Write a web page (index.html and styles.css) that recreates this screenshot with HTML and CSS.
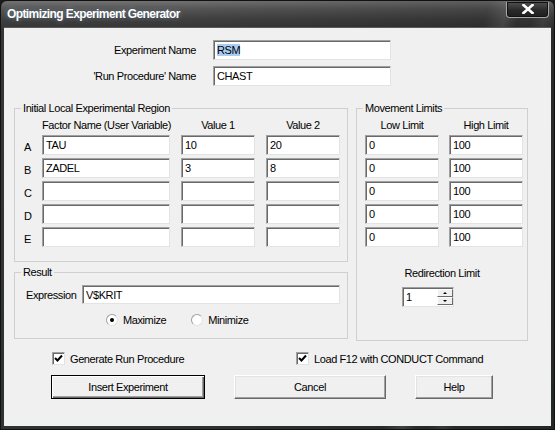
FILE: index.html
```html
<!DOCTYPE html>
<html lang="en">
<head>
    <meta charset="UTF-8">
    <title>Optimizing Experiment Generator</title>
    <link rel="stylesheet" href="styles.css">
</head>
<body>
    <div class="window">
        <div class="titlebar">
            <span class="title">Optimizing Experiment Generator</span>
            <div class="close-btn">
                <svg width="12" height="10" viewBox="0 0 12 10">
                    <path d="M1.5 1 L10.5 9 M10.5 1 L1.5 9" stroke="#fff" stroke-width="2.6" stroke-linecap="square"/>
                </svg>
            </div>
        </div>

        <div class="client">
            <div class="names">
                <label>Experiment Name</label>
                <div class="edit"><span class="sel">RSM</span></div>
                <label>'Run Procedure' Name</label>
                <div class="edit">CHAST</div>
            </div>

            <div class="main">
                <div class="left-col">
                    <fieldset class="group region">
                        <legend>Initial Local Experimental Region</legend>
                        <div class="factor-grid">
                            <span></span>
                            <span class="hdr">Factor Name (User Variable)</span>
                            <span class="hdr">Value 1</span>
                            <span class="hdr">Value 2</span>

                            <span class="letter">A</span>
                            <div class="edit">TAU</div>
                            <div class="edit">10</div>
                            <div class="edit">20</div>

                            <span class="letter">B</span>
                            <div class="edit">ZADEL</div>
                            <div class="edit">3</div>
                            <div class="edit">8</div>

                            <span class="letter">C</span>
                            <div class="edit"></div>
                            <div class="edit"></div>
                            <div class="edit"></div>

                            <span class="letter">D</span>
                            <div class="edit"></div>
                            <div class="edit"></div>
                            <div class="edit"></div>

                            <span class="letter">E</span>
                            <div class="edit"></div>
                            <div class="edit"></div>
                            <div class="edit"></div>
                        </div>
                    </fieldset>

                    <fieldset class="group result">
                        <legend>Result</legend>
                        <div class="result-body">
                            <div class="expr-row">
                                <span>Expression</span>
                                <div class="edit expr">V$KRIT</div>
                            </div>
                            <div class="radio-row">
                                <span class="radio-item"><span class="radio on"></span>Maximize</span>
                                <span class="radio-item"><span class="radio"></span>Minimize</span>
                            </div>
                        </div>
                    </fieldset>
                </div>

                <fieldset class="group limits">
                    <legend>Movement Limits</legend>
                    <div class="limits-body">
                        <div class="limit-grid">
                            <span class="hdr">Low Limit</span>
                            <span class="hdr">High Limit</span>
                            <div class="edit">0</div><div class="edit">100</div>
                            <div class="edit">0</div><div class="edit">100</div>
                            <div class="edit">0</div><div class="edit">100</div>
                            <div class="edit">0</div><div class="edit">100</div>
                            <div class="edit">0</div><div class="edit">100</div>
                        </div>
                        <div class="redir-label">Redirection Limit</div>
                        <div class="spinner">
                            <span class="spin-val">1</span>
                            <div class="spin-btns">
                                <span class="spin-btn"><span class="arrow-up"></span></span>
                                <span class="spin-btn"><span class="arrow-down"></span></span>
                            </div>
                        </div>
                    </div>
                </fieldset>
            </div>

            <div class="checks">
                <span class="check-item"><span class="checkbox"><svg width="9" height="9" viewBox="0 0 9 9"><path d="M1 4 L3.5 6.5 L8 1.5" stroke="#000" stroke-width="2" fill="none"/></svg></span>Generate Run Procedure</span>
                <span class="check-item"><span class="checkbox"><svg width="9" height="9" viewBox="0 0 9 9"><path d="M1 4 L3.5 6.5 L8 1.5" stroke="#000" stroke-width="2" fill="none"/></svg></span>Load F12 with CONDUCT Command</span>
            </div>

            <div class="buttons">
                <div class="btn default insert">Insert Experiment</div>
                <div class="btn cancel">Cancel</div>
                <div class="btn help">Help</div>
            </div>
        </div>
    </div>
</body>
</html>
```

FILE: styles.css
```css
* {
    box-sizing: border-box;
}

body {
    margin: 0;
    font-family: "Liberation Sans", Arial, sans-serif;
    font-size: 11px;
    letter-spacing: -0.4px;
    color: #000;
    background: #1c1c1c;
}

.window {
    width: 555px;
    height: 430px;
    display: flex;
    flex-direction: column;
    padding: 0 3px 3px 3px;
    border: 1px solid #111;
    border-radius: 7px 7px 0 0;
    background:
        linear-gradient(104deg, transparent 74%, rgba(255,255,255,.10) 77%, transparent 79%, transparent 81%, rgba(255,255,255,.07) 83%, transparent 85%),
        linear-gradient(to right, rgba(0,0,0,0) 30%, rgba(0,0,0,.22) 100%),
        linear-gradient(to bottom, #727272 0, #555 8px, #404040 18px, #363636 27px, #2e3232 100%);
}

.titlebar {
    height: 26px;
    display: flex;
    align-items: center;
    justify-content: space-between;
    padding-left: 3px;
}

.title {
    color: #fff;
    font-weight: bold;
    font-size: 12px;
    letter-spacing: -0.6px;
    text-shadow: 0 0 4px rgba(160,190,220,.6), 0 0 2px #222;
}

.close-btn {
    width: 43px;
    height: 16px;
    margin-top: -9px;
    margin-right: 2px;
    display: flex;
    align-items: center;
    justify-content: center;
    border: 1px solid #a8a8a8;
    border-top: none;
    border-radius: 0 0 4px 4px;
    background: linear-gradient(to bottom, #505050, #2a2a2a 55%, #1e1e1e);
    box-shadow: inset 0 0 0 1px #111;
}

.client {
    flex: 1;
    background: #f0f0f0;
    border-top: 1px solid #5a5a5a;
}

/* edit boxes */
.edit {
    height: 20px;
    background: #fff;
    border: 1px solid;
    border-color: #a0a0a0 #e3e3e3 #e3e3e3 #a0a0a0;
    box-shadow: inset 1px 1px 0 #696969;
    padding: 0 3px;
    line-height: 18px;
    white-space: nowrap;
    overflow: hidden;
}

.sel {
    background: #a9cdf2;
}

/* name rows */
.names {
    display: grid;
    grid-template-columns: 192px 178px;
    column-gap: 17px;
    row-gap: 6px;
    align-items: center;
    padding-top: 12px;
}

.names label {
    text-align: right;
}

/* groups */
.main {
    display: grid;
    grid-template-columns: 334px 172px;
    column-gap: 8px;
    padding-left: 10px;
    margin-top: 16px;
}

.group {
    margin: 0;
    padding: 0;
    border: 1px solid #cfcfcf;
    min-width: 0;
}

.group legend {
    margin-left: 6px;
    padding: 0 2px;
    line-height: 13px;
}

.region {
    height: 160px;
}

.factor-grid {
    display: grid;
    grid-template-columns: 16px 128px 74px 74px;
    grid-auto-rows: 20px;
    grid-template-rows: 14px;
    column-gap: 11px;
    row-gap: 3px;
    padding-top: 3px;
    align-items: center;
}

.hdr {
    text-align: center;
    line-height: 14px;
    white-space: nowrap;
}

.letter {
    padding-left: 9px;
    padding-top: 3px;
}

.result {
    height: 73px;
    margin-top: 4px;
}

.result-body {
    padding: 6px 0 0 11px;
}

.expr-row {
    display: grid;
    grid-template-columns: 56px 258px;
    align-items: center;
}

.edit.expr {
    height: 19px;
}

.radio-row {
    display: flex;
    gap: 25px;
    padding-left: 80px;
    margin-top: 10px;
}

.radio-item {
    display: flex;
    align-items: center;
    gap: 5px;
}

.radio {
    width: 12px;
    height: 12px;
    border-radius: 50%;
    border: 1px solid;
    border-color: #a0a0a0 #e3e3e3 #e3e3e3 #a0a0a0;
    background: #fff;
    display: flex;
    align-items: center;
    justify-content: center;
}

.radio.on::after {
    content: "";
    width: 4px;
    height: 4px;
    border-radius: 50%;
    background: #000;
}

.limits {
    height: 239px;
}

.limits-body {
    padding: 3px 0 0 8px;
}

.limit-grid {
    display: grid;
    grid-template-columns: 74px 74px;
    grid-template-rows: 14px;
    grid-auto-rows: 20px;
    column-gap: 10px;
    row-gap: 3px;
}

.redir-label {
    text-align: center;
    margin: 20px 8px 0 0;
    line-height: 13px;
}

.spinner {
    display: flex;
    width: 52px;
    height: 20px;
    margin: 7px 0 0 37px;
    background: #fff;
    border: 1px solid;
    border-color: #a0a0a0 #e3e3e3 #e3e3e3 #a0a0a0;
    box-shadow: inset 1px 1px 0 #696969;
}

.spin-val {
    flex: 1;
    padding-left: 3px;
    line-height: 18px;
}

.spin-btns {
    width: 16px;
    display: flex;
    flex-direction: column;
    padding: 1px 0;
}

.spin-btn {
    flex: 1;
    display: flex;
    align-items: center;
    justify-content: center;
    background: #f0f0f0;
    border: 1px solid;
    border-color: #fff #696969 #696969 #fff;
}

.arrow-up, .arrow-down {
    width: 0;
    height: 0;
    border-left: 2px solid transparent;
    border-right: 2px solid transparent;
}

.arrow-up {
    border-bottom: 2px solid #000;
}

.arrow-down {
    border-top: 2px solid #000;
}

/* check boxes */
.checks {
    display: grid;
    grid-template-columns: 244px auto;
    padding-left: 48px;
    margin-top: 11px;
}

.check-item {
    display: flex;
    align-items: center;
    gap: 5px;
}

.checkbox {
    width: 13px;
    height: 13px;
    display: flex;
    align-items: center;
    justify-content: center;
    background: #fff;
    border: 1px solid;
    border-color: #a0a0a0 #e3e3e3 #e3e3e3 #a0a0a0;
    box-shadow: inset 1px 1px 0 #696969;
}

/* buttons */
.buttons {
    display: flex;
    gap: 29px;
    padding-left: 47px;
    margin-top: 10px;
}

.btn {
    height: 24px;
    display: flex;
    align-items: center;
    justify-content: center;
    background: #f0f0f0;
    border: 1px solid;
    border-color: #fff #696969 #696969 #fff;
    box-shadow: inset -1px -1px 0 #a0a0a0, inset 1px 1px 0 #e3e3e3;
}

.btn.default {
    border-color: #000;
    box-shadow: inset 1px 1px 0 #fff, inset -1px -1px 0 #696969, inset -2px -2px 0 #a0a0a0;
}

.insert {
    width: 154px;
}

.cancel {
    width: 152px;
}

.help {
    width: 78px;
}
```
